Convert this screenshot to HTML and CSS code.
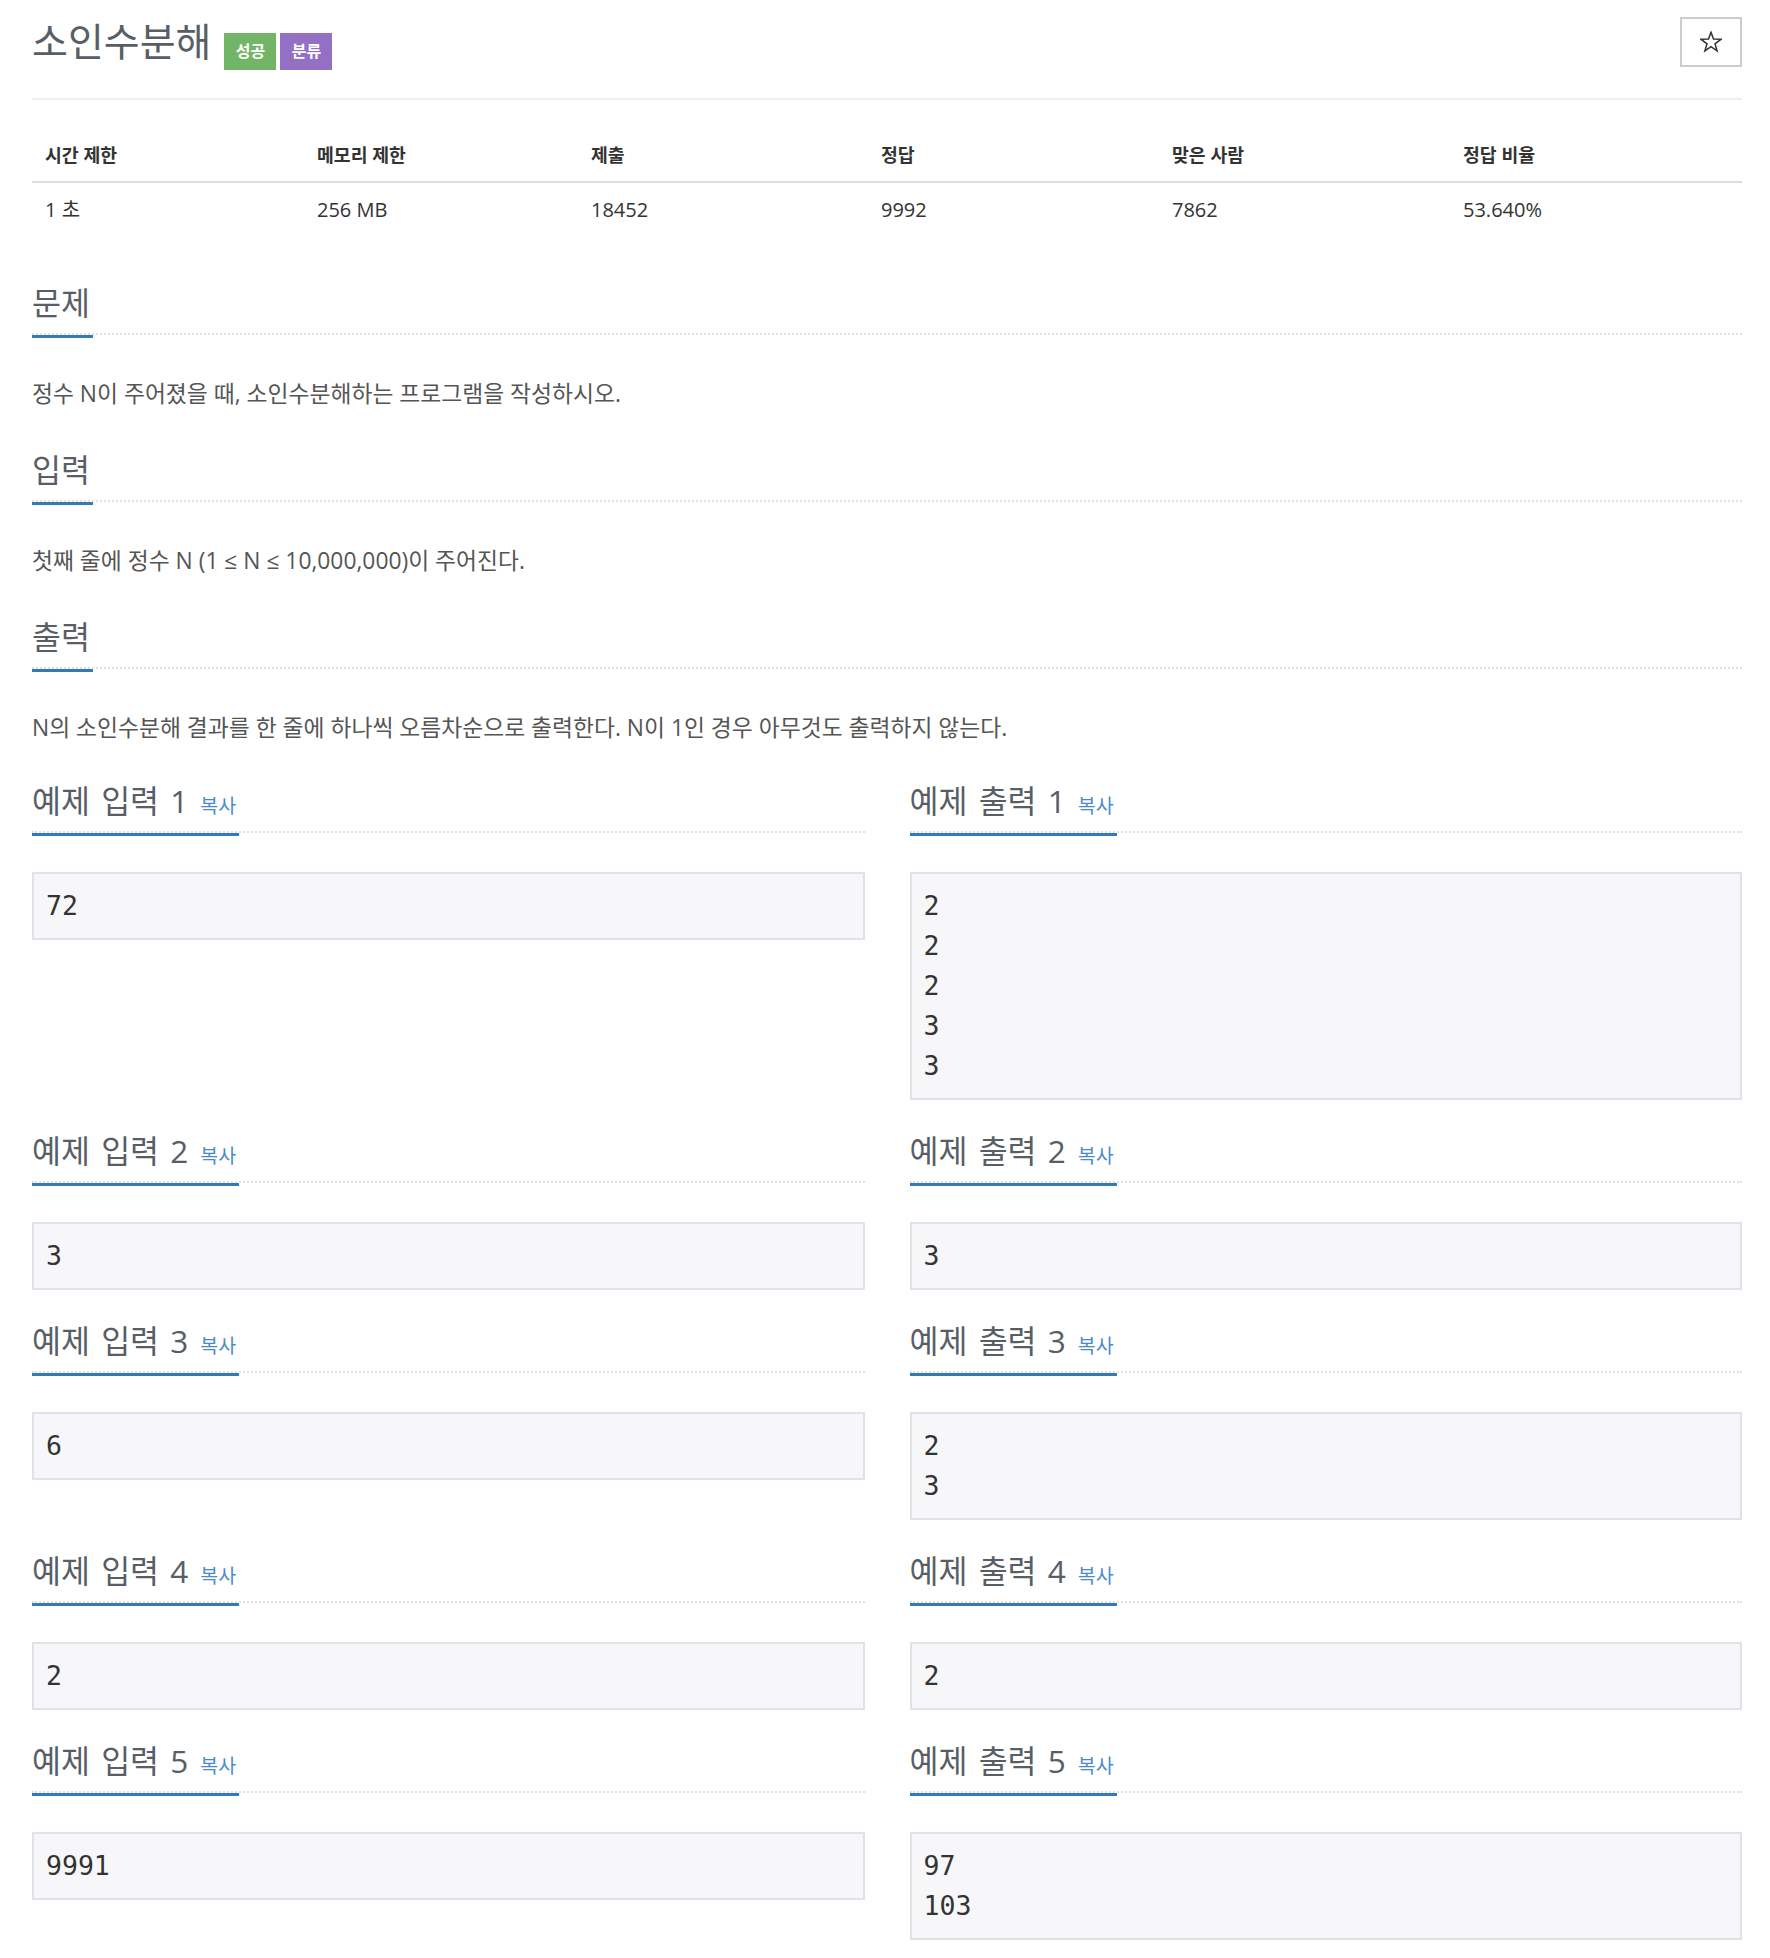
FILE: index.html
```html
<!DOCTYPE html>
<html lang="ko">
<head>
    <meta charset="UTF-8">
    <title>소인수분해</title>
    <link rel="stylesheet" href="styles.css">
</head>
<body>
    <div class="container">
        <div class="page-header">
            <div class="title-row">
                <h1 id="problem_title">소인수분해</h1>
                <span class="label label-success">성공</span>
                <span class="label label-purple">분류</span>
            </div>
            <button class="star-button" title="즐겨찾기">
                <svg width="22" height="22" viewBox="0 0 22 22">
                    <polygon points="11,1.2 13.5,8.1 20.9,8.3 15,12.8 17.1,19.9 11,15.7 4.9,19.9 7,12.8 1.1,8.3 8.5,8.1" fill="none" stroke="#333" stroke-width="1.5" stroke-linejoin="miter"/>
                </svg>
            </button>
        </div>

        <table class="problem-info">
            <thead>
                <tr>
                    <th class="col-time">시간 제한</th>
                    <th class="col-memory">메모리 제한</th>
                    <th class="col-submit">제출</th>
                    <th class="col-accepted">정답</th>
                    <th class="col-users">맞은 사람</th>
                    <th class="col-ratio">정답 비율</th>
                </tr>
            </thead>
            <tbody>
                <tr>
                    <td>1 초</td>
                    <td>256 MB</td>
                    <td>18452</td>
                    <td>9992</td>
                    <td>7862</td>
                    <td>53.640%</td>
                </tr>
            </tbody>
        </table>

        <section class="problem-section">
            <div class="headline"><h2>문제</h2></div>
            <p class="problem-text">정수 N이 주어졌을 때, 소인수분해하는 프로그램을 작성하시오.</p>
        </section>

        <section class="problem-section">
            <div class="headline"><h2>입력</h2></div>
            <p class="problem-text">첫째 줄에 정수 N (1 ≤ N ≤ 10,000,000)이 주어진다.</p>
        </section>

        <section class="problem-section">
            <div class="headline"><h2>출력</h2></div>
            <p class="problem-text">N의 소인수분해 결과를 한 줄에 하나씩 오름차순으로 출력한다. N이 1인 경우 아무것도 출력하지 않는다.</p>
        </section>

        <div class="sample-row first">
            <section class="sample">
                <div class="headline"><h2>예제 입력 1<a class="copy-button">복사</a></h2></div>
                <pre class="sampledata">72</pre>
            </section>
            <section class="sample">
                <div class="headline"><h2>예제 출력 1<a class="copy-button">복사</a></h2></div>
                <pre class="sampledata">2
2
2
3
3</pre>
            </section>
        </div>

        <div class="sample-row">
            <section class="sample">
                <div class="headline"><h2>예제 입력 2<a class="copy-button">복사</a></h2></div>
                <pre class="sampledata">3</pre>
            </section>
            <section class="sample">
                <div class="headline"><h2>예제 출력 2<a class="copy-button">복사</a></h2></div>
                <pre class="sampledata">3</pre>
            </section>
        </div>

        <div class="sample-row">
            <section class="sample">
                <div class="headline"><h2>예제 입력 3<a class="copy-button">복사</a></h2></div>
                <pre class="sampledata">6</pre>
            </section>
            <section class="sample">
                <div class="headline"><h2>예제 출력 3<a class="copy-button">복사</a></h2></div>
                <pre class="sampledata">2
3</pre>
            </section>
        </div>

        <div class="sample-row">
            <section class="sample">
                <div class="headline"><h2>예제 입력 4<a class="copy-button">복사</a></h2></div>
                <pre class="sampledata">2</pre>
            </section>
            <section class="sample">
                <div class="headline"><h2>예제 출력 4<a class="copy-button">복사</a></h2></div>
                <pre class="sampledata">2</pre>
            </section>
        </div>

        <div class="sample-row">
            <section class="sample">
                <div class="headline"><h2>예제 입력 5<a class="copy-button">복사</a></h2></div>
                <pre class="sampledata">9991</pre>
            </section>
            <section class="sample">
                <div class="headline"><h2>예제 출력 5<a class="copy-button">복사</a></h2></div>
                <pre class="sampledata">97
103</pre>
            </section>
        </div>
    </div>
</body>
</html>
```

FILE: styles.css
```css
body {
    font-family: 'Open Sans', 'Noto Sans CJK KR', sans-serif;
    margin: 0;
    padding: 0;
    background: #fff;
    color: #555;
}

.container {
    padding: 17px 28px 19px 32px;
}

/* 제목 */
.page-header {
    display: flex;
    justify-content: space-between;
    align-items: flex-start;
    padding-bottom: 28px;
    border-bottom: 2px solid #eee;
}

.title-row {
    display: flex;
    align-items: flex-start;
}

h1 {
    font-size: 39px;
    font-weight: 400;
    line-height: 44px;
    margin: 2px 13px 0 0;
    color: #585e66;
}

.label {
    display: inline-block;
    width: 52px;
    height: 37px;
    line-height: 37px;
    margin-top: 16px;
    margin-right: 4px;
    font-size: 16px;
    font-weight: bold;
    color: #fff;
    text-align: center;
}

.label-success {
    background-color: #73b566;
}

.label-purple {
    background-color: #9370c4;
}

.star-button {
    width: 62px;
    height: 50px;
    border: 2px solid #ccc;
    background: #fff;
    padding: 0;
    display: flex;
    align-items: center;
    justify-content: center;
    cursor: pointer;
}

/* 정보 테이블 */
.problem-info {
    width: 100%;
    margin-top: 29px;
    border-collapse: collapse;
    table-layout: fixed;
    color: #333;
}

.problem-info th {
    box-sizing: border-box;
    text-align: left;
    font-size: 18.3px;
    font-weight: bold;
    line-height: 24px;
    padding: 14px 13px;
    border-bottom: 2px solid #ddd;
}

.problem-info td {
    font-size: 20px;
    line-height: 24px;
    padding: 15px 13px;
}

.col-time { width: 272px; }
.col-memory { width: 274px; }
.col-submit { width: 290px; }
.col-accepted { width: 291px; }
.col-users { width: 291px; }

/* 섹션 */
.problem-section {
    margin-top: 46px;
}

.problem-section + .problem-section {
    margin-top: 41px;
}

.headline {
    display: flex;
    align-items: flex-end;
    border-bottom: 2px dotted #e0e0e0;
}

.headline h2 {
    font-size: 31.5px;
    font-weight: 400;
    line-height: 40px;
    margin: 0 0 -5px 0;
    padding: 0 3px 12px 0;
    border-bottom: 3px solid #337ab7;
    color: #585e66;
}

.sample .headline h2 {
    word-spacing: 3px;
}

.problem-text {
    margin: 44px 0 0 0;
    font-size: 22.8px;
    line-height: 30px;
    color: #555;
}

.copy-button {
    font-size: 19.5px;
    line-height: 1;
    color: #4a8acb;
    margin-left: 12px;
    cursor: pointer;
}

/* 예제 */
.sample-row {
    display: grid;
    grid-template-columns: 1fr 1fr;
    column-gap: 45px;
    align-items: start;
    margin-top: 31px;
}

.sample-row.first {
    margin-top: 38px;
}

.sampledata {
    margin: 39px 0 0 0;
    padding: 12px;
    background-color: #f7f7f9;
    border: 2px solid #e1e1e8;
    font-family: 'DejaVu Sans Mono', monospace;
    font-size: 26.5px;
    line-height: 40px;
    color: #333;
}
```
